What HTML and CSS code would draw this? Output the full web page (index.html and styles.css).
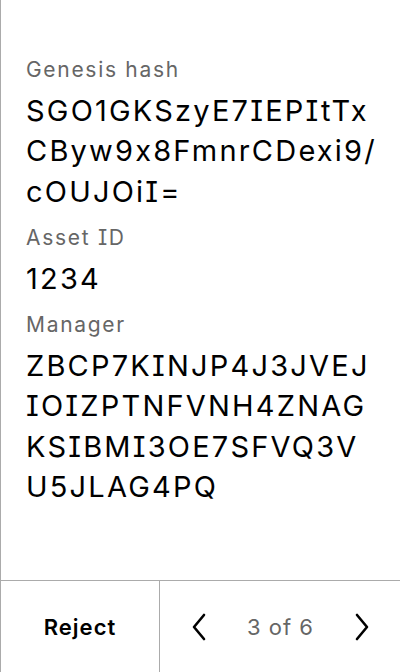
FILE: index.html
```html
<!DOCTYPE html>
<html>
<head>
<meta charset="utf-8">
<link rel="stylesheet" href="styles.css">
</head>
<body>
<div class="screen">
  <div class="content">
    <div class="field">
      <div class="label">Genesis hash</div>
      <div class="value value-hash">SGO1GKSzyE7IEPItTx<br>CByw9x8FmnrCDexi9/<br>cOUJOiI=</div>
    </div>
    <div class="field">
      <div class="label">Asset ID</div>
      <div class="value">1234</div>
    </div>
    <div class="field">
      <div class="label">Manager</div>
      <div class="value">ZBCP7KINJP4J3JVEJ<br>IOIZPTNFVNH4ZNAG<br>KSIBMI3OE7SFVQ3V<br>U5JLAG4PQ</div>
    </div>
  </div>
  <div class="footer">
    <div class="reject">Reject</div>
    <div class="pager">
      <svg class="chev" width="16" height="28" viewBox="0 0 16 28"><path d="M13 2 L3 14 L13 26" fill="none" stroke="#000" stroke-width="2.6" stroke-linecap="round" stroke-linejoin="round"/></svg>
      <span class="count">3 of 6</span>
      <svg class="chev" width="16" height="28" viewBox="0 0 16 28"><path d="M3 2 L13 14 L3 26" fill="none" stroke="#000" stroke-width="2.6" stroke-linecap="round" stroke-linejoin="round"/></svg>
    </div>
  </div>
</div>
</body>
</html>
```

FILE: styles.css
```css
* { box-sizing: border-box; }
html, body { margin: 0; padding: 0; background: #fff; }
body {
  font-family: Inter, "Noto Sans", sans-serif;
  color: #000;
  font-optical-sizing: none;
  font-variation-settings: "opsz" 14;
  font-feature-settings: "calt" 0, "cv08" 1;
}
.screen {
  width: 400px;
  height: 672px;
  border-left: 1px solid #ababab;
  display: flex;
  flex-direction: column;
}
.content {
  flex: 1;
  padding: 56px 0 0 25px;
  display: flex;
  flex-direction: column;
  gap: 12px;
}
.label {
  font-size: 21px;
  line-height: 28px;
  color: #666;
  letter-spacing: 1.7px;
  margin-bottom: 6.5px;
}
.value {
  font-size: 29px;
  line-height: 40.5px;
  letter-spacing: 2.2px;
  color: #000;
}
.value-hash { margin-top: 3px; }
.footer {
  height: 92px;
  border-top: 1px solid #ababab;
  display: flex;
}
.reject {
  width: 159px;
  border-right: 1px solid #ababab;
  display: flex;
  align-items: center;
  justify-content: center;
  font-size: 22px;
  font-weight: 600;
  letter-spacing: 1px;
}
.pager {
  flex: 1;
  display: flex;
  align-items: center;
  justify-content: space-between;
  padding: 0 30px 0 31px;
}
.count {
  font-size: 22px;
  color: #666;
  letter-spacing: 1px;
}
.chev { display: block; }
```
